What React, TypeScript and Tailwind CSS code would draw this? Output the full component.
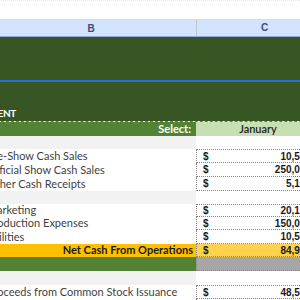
import type { ReactNode } from "react";

const lato = { fontFamily: "Lato, 'Open Sans', sans-serif" };
const num = { fontFamily: "'Liberation Sans', Arial, sans-serif" };

function Money({ value, h, top }: { value: string; h: string; top?: boolean }) {
  return (
    <div
      className={`${h} flex items-center justify-between border-l border-b border-dotted border-[#858585] bg-white pl-[6px] pr-[21px] text-[10px] font-bold text-[#1a1a1a] ${top ? "border-t" : ""}`}
      style={num}
    >
      <span>$</span>
      <span>{value}</span>
    </div>
  );
}

function Gap({ h }: { h: string }) {
  return (
    <div className="grid grid-cols-[210px_136px]">
      <div className={`${h} bg-[#f2f2f2]`} />
      <div className={`${h} bg-white`} />
    </div>
  );
}

function Item({ label, value, h, top }: { label: string; value: string; h: string; top?: boolean }) {
  return (
    <div className="grid grid-cols-[210px_136px]">
      <div
        className={`${h} flex items-center bg-white pl-[1px] text-[11px] text-[#3f3f3f] whitespace-nowrap`}
        style={lato}
      >
        {label}
      </div>
      <Money value={value} h={h} top={top} />
    </div>
  );
}

function Header({ children }: { children: ReactNode }) {
  return (
    <div className="flex items-center justify-center text-[10px] font-bold text-[#3b4d78]" style={num}>
      {children}
    </div>
  );
}

export default function App() {
  return (
    <div className="w-[300px] h-[300px] overflow-hidden bg-white">
      <div className="w-[346px] -ml-[14px]">
        <div className="h-[19px] border-t border-dotted border-[#e3e6ea] bg-white" />
        <div className="grid grid-cols-[210px_136px] h-[18px] border-t border-b border-t-[#dadce0] border-b-[#8fa9d6] bg-[#d3e3fd]">
          <Header>B</Header>
          <div className="border-l border-[#c4c7c5]">
            <Header>C</Header>
          </div>
        </div>

        <div className="h-[43px] bg-[#375623]" />
        <div className="h-[2px] bg-[#2d6fd2]" />
        <div className="h-[39px] bg-[#375623] flex items-end pb-[3px]">
          <div className="w-[30px] flex justify-end whitespace-nowrap">
            <span className="text-[10px] font-bold text-white leading-none tracking-[-0.3px]" style={lato}>
              CASH FLOW STATEMENT
            </span>
          </div>
        </div>

        <div className="grid grid-cols-[210px_136px] border-t border-dashed border-[#6e6e6e]">
          <div
            className="h-[14px] flex items-center justify-end bg-[#548235] pr-[5px] text-[11px] font-bold text-white"
            style={lato}
          >
            Select:
          </div>
          <div
            className="h-[14px] flex items-center justify-center bg-[#c6e0b4] pr-[12px] text-[11px] font-semibold text-[#1f1f1f]"
            style={lato}
          >
            January
          </div>
        </div>

        <Gap h="h-[13px]" />
        <Item label="Pre-Show Cash Sales" value="10,500" h="h-[14px]" top />
        <Item label="Official Show Cash Sales" value="250,000" h="h-[14px]" />
        <Item label="Other Cash Receipts" value="5,100" h="h-[14px]" />
        <Gap h="h-[13px]" />
        <Item label="Marketing" value="20,100" h="h-[13px]" top />
        <Item label="Production Expenses" value="150,000" h="h-[13px]" />
        <Item label="Utilities" value="10,500" h="h-[14px]" />

        <div className="grid grid-cols-[210px_136px]">
          <div
            className="h-[13px] flex items-center justify-end bg-[#ffc000] pr-[3px] text-[11px] font-bold text-[#1a1a1a] whitespace-nowrap"
            style={lato}
          >
            Net Cash From Operations
          </div>
          <div
            className="h-[13px] flex items-center justify-between border-l border-b border-dotted border-[#858585] bg-[#ffd24d] pl-[6px] pr-[21px] text-[10px] font-bold text-[#1a1a1a]"
            style={num}
          >
            <span>$</span>
            <span>84,950</span>
          </div>
        </div>
        <div className="grid grid-cols-[210px_136px]">
          <div className="h-[14px] bg-[#548235]" />
          <div className="h-[14px] border-l border-b border-dotted border-[#858585] bg-[#a6a6a6]" />
        </div>

        <Gap h="h-[14px]" />
        <Item label="Proceeds from Common Stock Issuance" value="48,500" h="h-[14px]" top />
        <Item label="Proceeds from Loans" value="0" h="h-[14px]" />
      </div>
    </div>
  );
}
